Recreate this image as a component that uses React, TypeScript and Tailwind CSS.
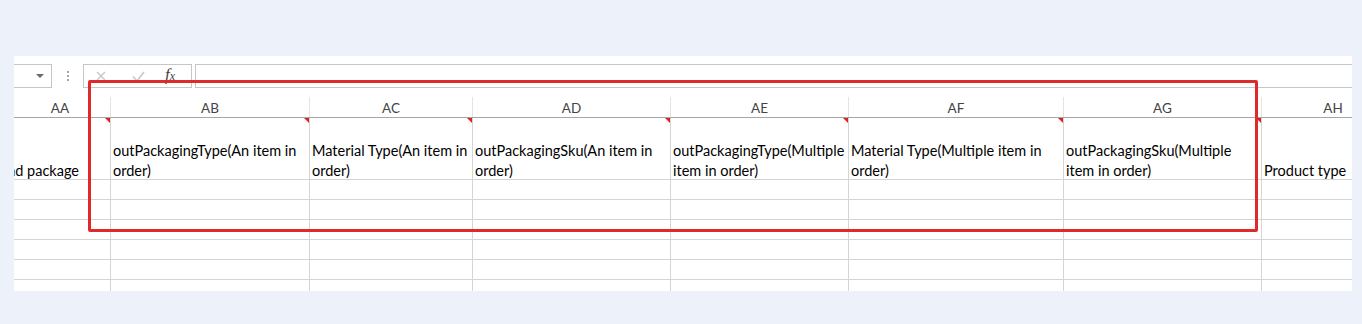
const cols = [
  { key: 'AB', w: 199, lines: ['outPackagingType(An item in', 'order)'] },
  { key: 'AC', w: 163, lines: ['Material Type(An item in', 'order)'] },
  { key: 'AD', w: 198, lines: ['outPackagingSku(An item in', 'order)'] },
  { key: 'AE', w: 178, lines: ['outPackagingType(Multiple', 'item in order)'] },
  { key: 'AF', w: 215, lines: ['Material Type(Multiple item in', 'order)'] },
  { key: 'AG', w: 198, lines: ['outPackagingSku(Multiple', 'item in order)'] },
];

const FONT = { fontFamily: 'Lato, "Open Sans", sans-serif' };

function CommentMark() {
  return (
    <span className="absolute right-0 top-0 h-0 w-0 border-t-[5px] border-l-[5px] border-t-[#e02020] border-l-transparent" />
  );
}

function FormulaBar() {
  return (
    <div className="flex h-[24px] items-stretch">
      <div className="flex w-[38px] items-center justify-end border border-l-0 border-[#c6c6c6] pr-[7px]">
        <span className="h-0 w-0 border-x-[4px] border-t-[4px] border-x-transparent border-t-[#6b6b6b]" />
      </div>
      <div className="flex w-[31px] flex-col items-center justify-center gap-[2px]">
        <span className="h-[2px] w-[2px] bg-[#a8a8a8]" />
        <span className="h-[2px] w-[2px] bg-[#a8a8a8]" />
        <span className="h-[2px] w-[2px] bg-[#a8a8a8]" />
      </div>
      <div className="flex w-[109px] items-center border border-[#c6c6c6] pl-[12px] text-[#c8c8c8]">
        <svg width="10" height="10" viewBox="0 0 10 10" fill="none" stroke="currentColor" strokeWidth="1.5">
          <path d="M1 1l8 8M9 1L1 9" />
        </svg>
        <svg className="ml-[26px]" width="13" height="11" viewBox="0 0 13 11" fill="none" stroke="currentColor" strokeWidth="1.6">
          <path d="M1 5.5l4 4.5L12 1" />
        </svg>
        <span
          className="ml-[20px] -mt-[4px] text-[17px] italic leading-none text-[#444]"
          style={{ fontFamily: '"Liberation Serif", serif' }}
        >
          f<span className="text-[12px]">x</span>
        </span>
      </div>
      <div className="ml-[3px] flex-1 border-y border-l border-[#c6c6c6]" />
    </div>
  );
}

export default function App() {
  return (
    <div className="h-[324px] w-[1362px] bg-[#edf1f9] pt-[56px] pl-[14px]" style={FONT}>
      <div className="relative h-[235px] w-[1338px] overflow-hidden bg-white pt-[8px]">
        <FormulaBar />

        {/* column headers */}
        <div className="mt-[9px] flex h-[21px] items-stretch border-b border-[#a6a6a6] text-[13.5px] leading-[16px] text-[#444]">
          <div className="flex w-[96px] items-end justify-center pr-[4px] pb-[1px]">AA</div>
          {cols.map((c) => (
            <div
              key={c.key}
              className="flex items-end justify-center border-l border-[#e4e4e4] pb-[1px]"
              style={{ width: c.w }}
            >
              {c.key}
            </div>
          ))}
          <div className="flex w-[91px] items-end justify-center border-l border-[#e4e4e4] pl-[52px] pb-[1px]">AH</div>
        </div>

        {/* first row with headings */}
        <div className="flex h-[62px] border-b border-[#d4d4d4] text-[14.5px] leading-[20px] text-black">
          <div className="relative flex w-[96px] items-end justify-end overflow-hidden pr-[31px]">
            <span className="translate-y-[2px] whitespace-nowrap">Handling and package</span>
            <CommentMark />
          </div>
          {cols.map((c) => (
            <div
              key={c.key}
              className="relative flex items-end border-l border-[#d4d4d4] px-[2px]"
              style={{ width: c.w }}
            >
              <span className="block translate-y-[2px] whitespace-nowrap">
                {c.lines[0]}
                <br />
                {c.lines[1]}
              </span>
              <CommentMark />
            </div>
          ))}
          <div className="flex w-[91px] items-end border-l border-[#d4d4d4] px-[2px]">
            <span className="translate-y-[2px] whitespace-nowrap">Product type</span>
          </div>
        </div>

        {/* empty rows */}
        {[0, 1, 2, 3, 4, 5].map((r) => (
          <div key={r} className="flex h-[20px] border-b border-[#d4d4d4]">
            <div className="w-[96px]" />
            {cols.map((c) => (
              <div key={c.key} className="border-l border-[#d4d4d4]" style={{ width: c.w }} />
            ))}
            <div className="w-[91px] border-l border-[#d4d4d4]" />
          </div>
        ))}

        {/* annotation box */}
        <div className="absolute left-[74px] top-[24px] h-[152px] w-[1170px] rounded-[2px] border-[3px] border-[#e02a2a]" />
      </div>
    </div>
  );
}
